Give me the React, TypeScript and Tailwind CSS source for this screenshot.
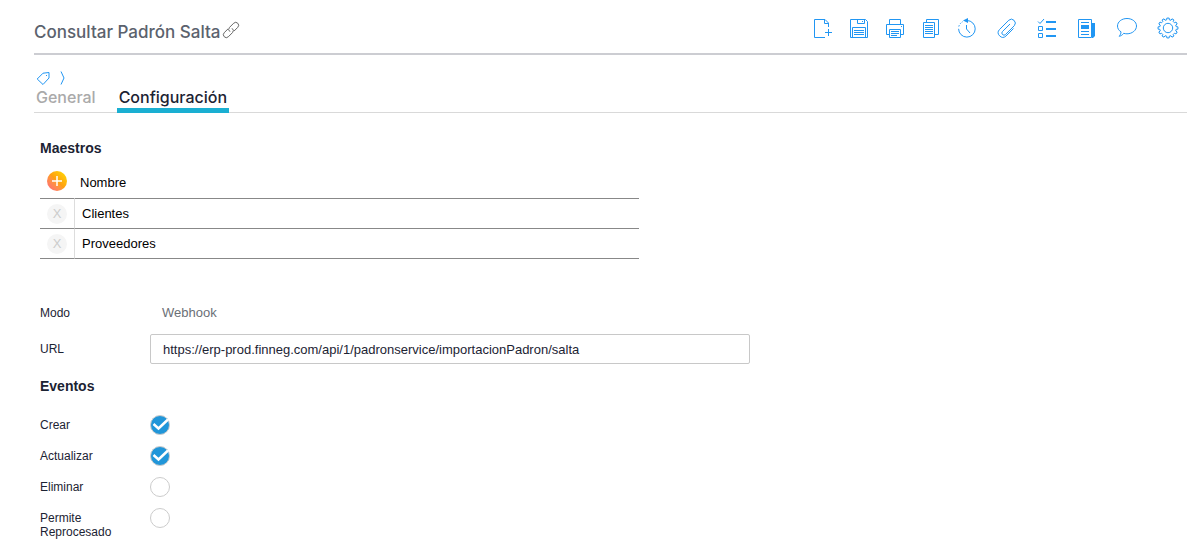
import type { ReactNode } from "react"

const createTools = [
  {
    label: "Nuevo",
    icon: (
      <>
        <path d="M14 21.5H3.5v-18H14L17.5 7v4M13.5 3.5v4h4" />
        <path d="M14 16.5h7M17.5 13v7" />
      </>
    ),
  },
  {
    label: "Guardar",
    icon: (
      <>
        <path d="M3.5 3.5h15l2 2v16h-17z" />
        <path d="M10.5 3.5v4h7v-4M15 5.5h1" />
        <path d="M5.5 21.5v-10h13v10M7 14.5h10M7 16.5h10M7 18.5h10" />
      </>
    ),
  },
  {
    label: "Imprimir",
    icon: (
      <>
        <path d="M6.5 8.5v-5h11v5M6.5 18.5h-3v-10h17v10h-3M18 10.5h1" />
        <path d="M6.5 13.5h11v8h-11zM8 15.5h8M8 17.5h8M8 19.5h6" />
      </>
    ),
  },
  {
    label: "Copiar",
    icon: (
      <>
        <path d="M7.5 6.5v-3h12v15h-4" />
        <path d="M4.5 6.5h11v15h-11zM6 9.5h8M6 11.5h8M6 13.5h8M6 15.5h8M6 17.5h8" />
      </>
    ),
  },
  {
    label: "Historial",
    icon: (
      <>
        <path d="M12 4.5a8.3 8.3 0 1 1-8.4 8.3" />
        <path d="M3.8 10.5a8.3 8.3 0 0 1 4.2-5" strokeDasharray="1.5 1.5" />
        <path d="M13 2v5L8 4.5z" fill="currentColor" stroke="none" />
        <path d="M11.5 9v4l3.5 4" />
      </>
    ),
  },
]

const docTools = [
  {
    label: "Adjuntos",
    icon: (
      <path d="M18.5 12.5 11 20a4.6 4.6 0 0 1-6.5-6.5L13.8 4.2a3.9 3.9 0 0 1 5.5 5.5L10.5 18.5a2.1 2.1 0 0 1-3-3L15 8" />
    ),
  },
  {
    label: "Tareas",
    icon: (
      <>
        <path d="M3 5.5 5 7.5 9 3" />
        <path d="M3.5 10.5h4v4h-4zM3.5 17.5h4v4h-4z" />
        <path d="M11 6h10M11 13h10M11 20h10" strokeWidth="2" />
      </>
    ),
  },
  {
    label: "Novedades",
    icon: (
      <>
        <path d="M3.5 3.5h13v18h-13zM6 6.5h8M6 15.5h8M6 18.5h8" />
        <path d="M6 9h8v4H6zM17 7h3v13l-2 2h-1z" fill="currentColor" stroke="none" />
      </>
    ),
  },
  {
    label: "Comentarios",
    icon: (
      <path d="M6 15.8C3.7 14.5 2.5 12.3 2.5 10c0-4.2 4.2-7.5 9.5-7.5s9.5 3.3 9.5 7.5-4.2 7.8-9.5 7.8c-1.2 0-2.3-.2-3.3-.5-1.2 1.6-2.5 2.5-4.5 3 1.100-1.400 1.800-2.700 1.800-4.500z" />
    ),
  },
  {
    label: "Opciones",
    icon: (
      <>
        <path d={gearPath(13, 12, 12)} />
        <circle cx="13" cy="12" r="4.7" />
      </>
    ),
  },
]

const masters = ["Clientes", "Proveedores"]

const events = [
  { id: "crear", label: "Crear", checked: true },
  { id: "actualizar", label: "Actualizar", checked: true },
  { id: "eliminar", label: "Eliminar", checked: false },
  { id: "reprocesado", label: "Permite Reprocesado", checked: false },
]

function gearPath(cx: number, cy: number, teeth: number) {
  const step = (Math.PI * 2) / teeth
  const point = (angle: number, radius: number) =>
    `${(cx + Math.cos(angle) * radius).toFixed(2)} ${(cy + Math.sin(angle) * radius).toFixed(2)}`
  const points: string[] = []
  for (let i = 0; i < teeth; i++) {
    const a = i * step
    points.push(
      point(a - step * 0.3, 8.3),
      point(a - step * 0.22, 10),
      point(a + step * 0.22, 10),
      point(a + step * 0.3, 8.3)
    )
  }
  return `M${points.join("L")}Z`
}

function ToolButton({ label, children }: { label: string; children: ReactNode }) {
  return (
    <button type="button" aria-label={label} className="size-6 text-[#2196f3]">
      <svg viewBox="0 0 24 24" className="size-6" fill="none" stroke="currentColor">
        {children}
      </svg>
    </button>
  )
}

function Header() {
  return (
    <header className="flex items-start justify-between border-b-2 border-[#cccdd2] pt-4 pr-2 pb-[5px]">
      <div className="flex items-center gap-0.5">
        <h1 className="font-[Inter,sans-serif] text-[17px] leading-8 font-medium text-[#5b626d]">
          Consultar Padrón Salta
        </h1>
        <a href="#enlace" aria-label="Copiar enlace" className="pb-1 text-[#666]">
          <svg viewBox="0 0 18 18" className="size-[18px]" fill="none" stroke="currentColor">
            <path d="M8 10.7a2.9 2.9 0 0 1-.5-4.300L11.700 2.200a2.900 2.900 0 0 1 4.100 4.100L12 10.100" />
            <path d="M10 7.300a2.900 2.900 0 0 1 .5 4.300L6.300 15.800a2.900 2.900 0 0 1-4.100-4.100L6 7.900" />
          </svg>
        </a>
      </div>
      <div className="flex gap-4">
        <div className="flex gap-3">
          {createTools.map((tool) => (
            <ToolButton key={tool.label} label={tool.label}>
              {tool.icon}
            </ToolButton>
          ))}
        </div>
        {docTools.map((tool) => (
          <ToolButton key={tool.label} label={tool.label}>
            {tool.icon}
          </ToolButton>
        ))}
      </div>
    </header>
  )
}

function Tabs() {
  return (
    <div className="border-b border-[#d9d9d9] pt-[15px]">
      <div className="flex h-4 items-center gap-2 pl-0.5 text-[#2196f3]">
        <svg viewBox="0 0 16 16" className="size-4" fill="none" stroke="currentColor">
          <path d="M1.2 9 7 3.2 13 2.5V8L7 14.5z" />
          <path d="M10 5.5h1" />
        </svg>
        <svg viewBox="0 0 6 16" className="h-4 w-1.5" fill="none" stroke="currentColor">
          <path d="M1 1.5 4 8 1 14.5" />
        </svg>
      </div>
      <nav className="-mb-px flex gap-[19px] font-[Inter,sans-serif] text-base leading-[22px] font-medium">
        <a href="#general" className="px-0.5 text-[#aaa]">
          General
        </a>
        <a href="#configuracion" className="border-b-5 border-[#1aafd2] px-0.5 text-[#1c2333]">
          Configuración
        </a>
      </nav>
    </div>
  )
}

function MastersTable() {
  return (
    <table className="w-full max-w-[599px] border-separate border-spacing-0 text-[13px] text-black">
      <thead>
        <tr className="h-[31px]">
          <th className="w-[35px] border-r border-b border-r-transparent border-b-[#888] p-0">
            <button
              type="button"
              aria-label="Agregar maestro"
              className="mx-auto mb-1 flex size-5 items-center justify-center rounded-full bg-linear-to-tr from-[#ff5f7a] via-[#ff9f10] to-[#ffe000] text-white"
            >
              <svg viewBox="0 0 10 10" className="size-2.5" stroke="currentColor" strokeWidth="1.5">
                <path d="M5 0v10M0 5h10" />
              </svg>
            </button>
          </th>
          <th className="border-b border-[#888] p-0 pl-[5px] text-left font-normal">Nombre</th>
        </tr>
      </thead>
      <tbody>
        {masters.map((name) => (
          <tr key={name} className="h-[30px]">
            <td className="border-r border-b border-r-[#ddd] border-b-[#888] p-0">
              <button
                type="button"
                aria-label={`Quitar ${name}`}
                className="mx-auto flex size-5 items-center justify-center rounded-full bg-[#f5f5f5] text-[13px] text-[#ccc]"
              >
                X
              </button>
            </td>
            <td className="border-b border-[#888] p-0 pt-px pl-[7px]">{name}</td>
          </tr>
        ))}
      </tbody>
    </table>
  )
}

function EventCheck({ id, label, checked }: { id: string; label: string; checked: boolean }) {
  return (
    <div className="flex items-start">
      <label htmlFor={id} className="w-[110px] pt-[3px] pr-6 leading-[14px]">
        {label}
      </label>
      <span className="grid size-5 text-white">
        <input
          id={id}
          type="checkbox"
          defaultChecked={checked}
          className="peer col-start-1 row-start-1 size-5 appearance-none rounded-full border border-[#ccc] bg-white checked:bg-[#2196d9]"
        />
        <svg
          viewBox="0 0 20 20"
          className="pointer-events-none invisible col-start-1 row-start-1 size-5 peer-checked:visible"
          fill="none"
          stroke="currentColor"
          strokeWidth="2.5"
        >
          <path d="M3.5 9 8.500 13.500 18 4.500" />
        </svg>
      </span>
    </div>
  )
}

export default function App() {
  return (
    <div className="bg-white pl-[34px] font-['Liberation_Sans',Arial,sans-serif] text-xs text-[#1c2333]">
      <Header />
      <Tabs />
      <main className="pr-4 pl-1.5">
        <h2 className="pt-[25px] text-sm font-bold">Maestros</h2>
        <div className="pt-[10px]">
          <MastersTable />
        </div>

        <div className="flex items-center pt-[44px]">
          <span className="w-[110px]">Modo</span>
          <span className="px-3 text-[13px] leading-5 text-[#6b6f76]">Webhook</span>
        </div>
        <div className="flex items-center pt-[11px]">
          <label htmlFor="url" className="w-[110px]">
            URL
          </label>
          <input
            id="url"
            type="text"
            defaultValue="https://erp-prod.finneg.com/api/1/padronservice/importacionPadron/salta"
            className="h-[30px] w-full max-w-[600px] rounded-xs border border-[#c8c8c8] px-3 text-[13px]"
          />
        </div>

        <h2 className="pt-3 text-sm font-bold">Eventos</h2>
        <div className="flex flex-col gap-[11px] pt-[19px]">
          {events.map((event) => (
            <EventCheck key={event.id} {...event} />
          ))}
        </div>
      </main>
    </div>
  )
}
